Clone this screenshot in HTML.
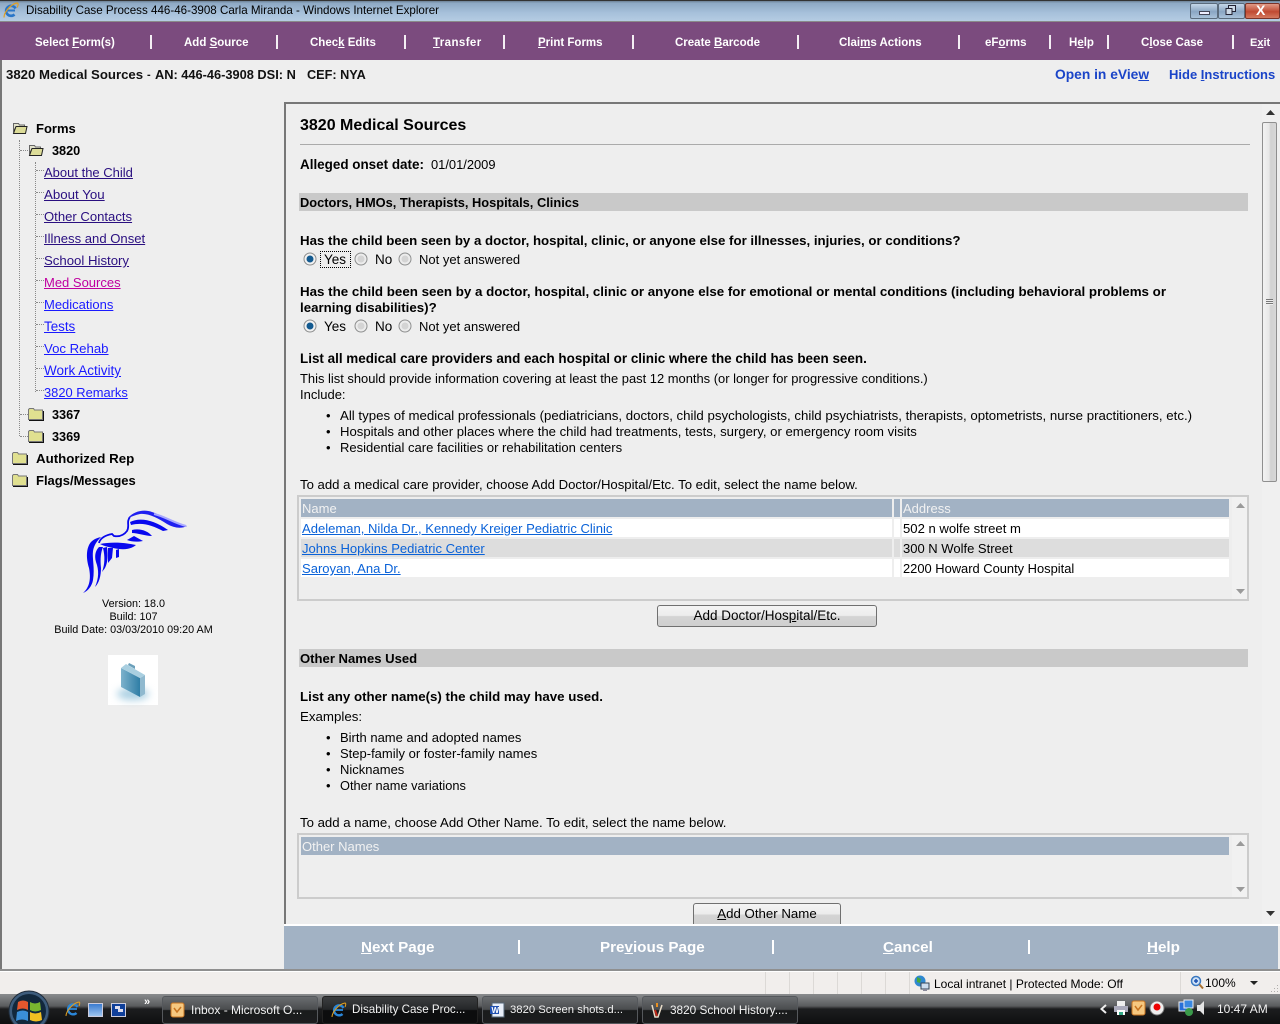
<!DOCTYPE html>
<html><head><meta charset="utf-8"><title>Disability Case Process</title>
<style>
html,body{margin:0;padding:0;width:1280px;height:1024px;overflow:hidden;background:#eee;font-family:"Liberation Sans",Arial,sans-serif;font-size:13px;color:#000}
.t,.a{position:absolute;white-space:nowrap;line-height:16px;margin-top:1px}
.a{display:block}
.b{font-weight:bold;font-size:13.3px}
u{text-decoration:underline}
.n{color:#fff;font-weight:bold;font-size:11.5px;top:35px;margin-top:0}
.z{margin-top:0}
.s{position:absolute;width:2px;background:#f4eef4;top:35px;height:14px}
.l{color:#2a0f80;text-decoration:underline;font-size:13.1px}
.lk{color:#1a1aff;text-decoration:underline;font-size:13.1px}
.p{color:#0a62d8;text-decoration:underline;font-size:13.05px}
.box{position:absolute;background:#eee}
.f{color:#fff;font-weight:bold;font-size:15.2px;top:940px;margin-top:0}
.fs{position:absolute;width:2px;height:14px;top:940px;background:#fff}
.btn{position:absolute;box-sizing:border-box;border:1px solid #707070;border-radius:3px;background:linear-gradient(#f4f4f4 0,#ececec 48%,#d4d4d4 52%,#cfcfcf 100%);text-align:center;font-size:13.25px;line-height:20px}
.tb{position:absolute;top:996px;height:28px;box-sizing:border-box;border:1px solid #55585c;border-radius:3px;color:#f2f2f2;font-size:11.6px;line-height:26px;white-space:nowrap;background:linear-gradient(#6a6d70 0,#4a4c4e 48%,#191b1c 52%,#1c1d1e 100%)}
.dot{position:absolute;border-color:#8a8a8a;border-style:dotted;border-width:0}
svg{position:absolute;overflow:visible}
.st{position:absolute;top:972px;width:1px;height:22px;background:#dcd9d6}
</style></head><body>

<!-- title bar -->
<div class="box" style="left:0;top:0;width:1280px;height:21px;background:linear-gradient(#5d6e80 0,#8ea9c4 15%,#a6c0da 60%,#b5cce2 100%)"></div>
<div class="box" style="left:0;top:0;width:1280px;height:1px;background:#333"></div>
<svg style="left:3px;top:2px" width="16" height="17" viewBox="0 0 16 17"><path d="M12.500 6.500a5 5 0 1 0-1 6" fill="none" stroke="#2a76c8" stroke-width="2.600"/><path d="M3 8.500h9" stroke="#2a76c8" stroke-width="2"/><path d="M1 15.500C1 10 8 2 14 1c1.500 0 1.500 2.500 0 4.500" fill="none" stroke="#e3a020" stroke-width="1.200"/></svg>
<div class="t" style="left:26px;top:2px;font-size:11.6px;color:#000">Disability Case Process 446-46-3908 Carla Miranda - Windows Internet Explorer</div>
<div class="box" style="left:1190px;top:3px;width:26px;height:14px;border:1px solid #5a6b7c;border-radius:2px;background:linear-gradient(#c4d6e8,#8aa6c3 55%,#a9c2da)"></div>
<div class="box" style="left:1199px;top:11px;width:9px;height:2px;background:#eef;border:1px solid #445"></div>
<div class="box" style="left:1218px;top:3px;width:25px;height:14px;border:1px solid #5a6b7c;border-radius:2px;background:linear-gradient(#c4d6e8,#8aa6c3 55%,#a9c2da)"></div>
<svg style="left:1224px;top:4px" width="14" height="12" viewBox="0 0 14 12"><rect x="4.500" y="1.500" width="7" height="6" fill="#cdd9e6" stroke="#223"/><rect x="2" y="4.500" width="6" height="6" fill="#cdd9e6" stroke="#223"/></svg>
<div class="box" style="left:1245px;top:3px;width:33px;height:14px;border:1px solid #7a3328;border-radius:2px;background:linear-gradient(#e09a86,#c04a32 55%,#d47a60)"></div>
<div class="t z" style="left:1256px;top:2px;color:#fff;font-size:14px;font-weight:bold">X</div>

<!-- menu -->
<div class="box" style="left:0;top:21px;width:1280px;height:39px;background:#7b4b7e;border-top:1px solid #8a8a8a;box-sizing:border-box"></div>
<div class="t n" style="left:35px">Select <u>F</u>orm(s)</div><div class="s" style="left:150px"></div>
<div class="t n" style="left:184px">Add <u>S</u>ource</div><div class="s" style="left:276px"></div>
<div class="t n" style="left:310px">Chec<u>k</u> Edits</div><div class="s" style="left:404px"></div>
<div class="t n" style="left:433px;letter-spacing:.4px"><u>T</u>ransfer</div><div class="s" style="left:503px"></div>
<div class="t n" style="left:538px"><u>P</u>rint Forms</div><div class="s" style="left:632px"></div>
<div class="t n" style="left:675px">Create <u>B</u>arcode</div><div class="s" style="left:797px"></div>
<div class="t n" style="left:839px">Clai<u>m</u>s Actions</div><div class="s" style="left:958px"></div>
<div class="t n" style="left:985px">eF<u>o</u>rms</div><div class="s" style="left:1049px"></div>
<div class="t n" style="left:1069px">H<u>e</u>lp</div><div class="s" style="left:1107px"></div>
<div class="t n" style="left:1141px">C<u>l</u>ose Case</div><div class="s" style="left:1232px"></div>
<div class="t n" style="left:1250px;font-size:11px">E<u>x</u>it</div>

<!-- header row -->
<div class="t b" style="left:6px;top:66px;font-size:13.2px;color:#111">3820 Medical Sources</div>
<div class="t" style="left:147px;top:66px;font-size:11px;font-weight:bold;color:#111">-</div>
<div class="t b" style="left:155px;top:66px;font-size:12.8px;color:#111">AN: 446-46-3908 DSI: N</div>
<div class="t b" style="left:307px;top:66px;font-size:12.7px;color:#111">CEF: NYA</div>
<div class="t b" style="left:1055px;top:66px;color:#1a44c8;font-size:13.8px">Open in eVie<u>w</u></div>
<div class="t b" style="left:1169px;top:66px;color:#1a44c8;font-size:13px">Hide <u>I</u>nstructions</div>

<!-- frames -->
<div class="box" style="left:0;top:60px;width:2px;height:910px;background:#777"></div>
<div class="box" style="left:284px;top:102px;width:996px;height:2px;background:#777"></div>
<div class="box" style="left:284px;top:102px;width:2px;height:868px;background:#777"></div>

<!-- tree lines -->
<div class="dot" style="left:19px;top:140px;height:296px;border-left-width:1px"></div>
<div class="dot" style="left:20px;top:150px;width:8px;border-top-width:1px"></div>
<div class="dot" style="left:20px;top:414px;width:8px;border-top-width:1px"></div>
<div class="dot" style="left:20px;top:436px;width:8px;border-top-width:1px"></div>
<div class="dot" style="left:35px;top:162px;height:230px;border-left-width:1px"></div>
<div class="dot" style="left:36px;top:170px;width:8px;border-top-width:1px"></div>
<div class="dot" style="left:36px;top:192px;width:8px;border-top-width:1px"></div>
<div class="dot" style="left:36px;top:214px;width:8px;border-top-width:1px"></div>
<div class="dot" style="left:36px;top:236px;width:8px;border-top-width:1px"></div>
<div class="dot" style="left:36px;top:258px;width:8px;border-top-width:1px"></div>
<div class="dot" style="left:36px;top:280px;width:8px;border-top-width:1px"></div>
<div class="dot" style="left:36px;top:302px;width:8px;border-top-width:1px"></div>
<div class="dot" style="left:36px;top:324px;width:8px;border-top-width:1px"></div>
<div class="dot" style="left:36px;top:346px;width:8px;border-top-width:1px"></div>
<div class="dot" style="left:36px;top:368px;width:8px;border-top-width:1px"></div>
<div class="dot" style="left:36px;top:390px;width:8px;border-top-width:1px"></div>

<!-- folders -->
<svg style="left:12px;top:121px" width="16" height="14" viewBox="0 0 16 14"><path d="M1.500 2.500h5l1 1.500h5v2H4L1.500 10z" fill="#e2e2cc" stroke="#666"/><path d="M1.500 12.500L4 5.500h11l-1.500 7z" fill="#dcdc98" stroke="#222"/></svg>
<svg style="left:28px;top:143px" width="16" height="14" viewBox="0 0 16 14"><path d="M1.500 2.500h5l1 1.500h5v2H4L1.500 10z" fill="#e2e2cc" stroke="#666"/><path d="M1.500 12.500L4 5.500h11l-1.500 7z" fill="#dcdc98" stroke="#222"/></svg>
<svg style="left:28px;top:407px" width="16" height="14" viewBox="0 0 16 14"><path d="M.5 12.500v-10l1-1h4l1 1.500h8v9.500z" fill="#e0e090" stroke="#777"/><path d="M1 13.500h15M15.500 4v9.500" stroke="#111"/></svg>
<svg style="left:28px;top:429px" width="16" height="14" viewBox="0 0 16 14"><path d="M.5 12.500v-10l1-1h4l1 1.500h8v9.500z" fill="#e0e090" stroke="#777"/><path d="M1 13.500h15M15.500 4v9.500" stroke="#111"/></svg>
<svg style="left:12px;top:451px" width="16" height="14" viewBox="0 0 16 14"><path d="M.5 12.500v-10l1-1h4l1 1.500h8v9.500z" fill="#e0e090" stroke="#777"/><path d="M1 13.500h15M15.500 4v9.500" stroke="#111"/></svg>
<svg style="left:12px;top:473px" width="16" height="14" viewBox="0 0 16 14"><path d="M.5 12.500v-10l1-1h4l1 1.500h8v9.500z" fill="#e0e090" stroke="#777"/><path d="M1 13.500h15M15.500 4v9.500" stroke="#111"/></svg>

<!-- tree text -->
<div class="t b" style="left:36px;top:120px;font-size:13px">Forms</div>
<div class="t b" style="left:52px;top:142px;font-size:12.7px">3820</div>
<a class="a l" style="left:44px;top:164px;font-size:13px">About the Child</a>
<a class="a l" style="left:44px;top:186px;font-size:13.3px">About You</a>
<a class="a l" style="left:44px;top:208px">Other Contacts</a>
<a class="a l" style="left:44px;top:230px">Illness and Onset</a>
<a class="a l" style="left:44px;top:252px;font-size:13.2px">School History</a>
<a class="a" style="left:44px;top:274px;font-size:13px;color:#c000a0;text-decoration:underline">Med Sources</a>
<a class="a lk" style="left:44px;top:296px;font-size:13px">Medications</a>
<a class="a lk" style="left:44px;top:318px;font-size:13.4px">Tests</a>
<a class="a lk" style="left:44px;top:340px;font-size:13.2px">Voc Rehab</a>
<a class="a lk" style="left:44px;top:362px;font-size:13.5px">Work Activity</a>
<a class="a lk" style="left:44px;top:384px;font-size:12.9px">3820 Remarks</a>
<div class="t b" style="left:52px;top:406px;font-size:12.7px">3367</div>
<div class="t b" style="left:52px;top:428px;font-size:12.7px">3369</div>
<div class="t b" style="left:36px;top:450px">Authorized Rep</div>
<div class="t b" style="left:36px;top:472px;font-size:13px">Flags/Messages</div>

<!-- eagle logo -->
<svg style="left:70px;top:500px" width="130" height="100" viewBox="0 0 130 100" fill="#0808ee">
<path d="M13 93C20 87 21 78 19 68 16 58 16 48 21 42c3-3 6-4 10-5-4 4-7 8-8 14-1 7 2 17 0 29-1 6-5 11-10 13z"/>
<path d="M25 87c4-9 4-17 1-25-2-7 0-12 3-15l4 0c-2 5-3 11-2 21 0 8-2 15-6 19z"/>
<path d="M32 72c3-8 3-16 1-24l4-1c1 8 1 15-2 21z"/>
<path d="M38 63L38 48l5 0-1 10z"/>
<path d="M46 58V50l3-1v8z"/>
<path d="M30 44c10-2 22-2 36 1-6 5-14 5-23 3-5-1-9-2-13-4z"/>
<path d="M29 43c1-5 7-8 13-9l2 2c6 1 10-1 13-5 3-5-1-9 3-14" fill="none" stroke="#0808ee" stroke-width="1.800"/>
<path d="M58 18C64 11 74 9 82 12 92 15 100 23 117 26c-6 3-13 2-20-2C88 18 78 13 70 14c-5 1-9 3-12 4z" fill="#2020f0"/>
<path d="M60 22c10-5 24-2 38 8l-5 1C82 25 72 22 61 25z"/>
<path d="M62 30c8-2 16 1 20 6-7 0-14-3-20-3z"/>
<path d="M57 40l7-4 9 5c-5 1-11 1-16-1z"/>
<path d="M84 14c10 2 20 9 32 12" fill="none" stroke="#a8a8ff" stroke-width="2"/>
</svg>
<div class="t z" style="left:0;width:267px;text-align:center;top:598px;font-size:10.8px;line-height:13px">Version: 18.0<br>Build: 107<br>Build Date: 03/03/2010 09:20 AM</div>

<!-- briefcase -->
<div class="box" style="left:108px;top:655px;width:50px;height:50px;background:#fff"></div>
<div class="box" style="left:117px;top:688px;width:32px;height:12px;border-radius:50%;background:#a9cfe2;filter:blur(4px)"></div>
<svg style="left:108px;top:655px" width="50" height="50" viewBox="0 0 50 50"><defs><linearGradient id="bc" x1="0" x2="1" y1="0" y2="0"><stop offset="0" stop-color="#7db2cc"/><stop offset="1" stop-color="#2f7ea6"/></linearGradient></defs><path d="M13 13L32 23V42L13 32z" fill="url(#bc)"/><path d="M32 23l5-3V39l-5 3z" fill="#8fb9cf"/><path d="M13 13l5-4 19 11-5 3z" fill="#a9cfe0"/><path d="M20 10l1-2 6 3 0 3z" fill="#6a9fba"/></svg>

<!-- content -->
<div class="t b" style="left:300px;top:115px;font-size:16px;line-height:18px;margin-top:2px">3820 Medical Sources</div>
<div class="box" style="left:300px;top:144px;width:950px;height:1px;background:#aaa"></div>
<div class="t b" style="left:300px;top:156px;font-size:13.45px">Alleged onset date:</div>
<div class="t" style="left:431px;top:156px;font-size:12.9px">01/01/2009</div>

<div class="box" style="left:299px;top:193px;width:949px;height:18px;background:#c9c9c9"></div>
<div class="t b" style="left:300px;top:194px;font-size:12.85px">Doctors, HMOs, Therapists, Hospitals, Clinics</div>

<div class="t b" style="left:300px;top:232px;font-size:13.28px">Has the child been seen by a doctor, hospital, clinic, or anyone else for illnesses, injuries, or conditions?</div>
<svg style="left:303px;top:252px" width="14" height="14"><circle cx="7" cy="7" r="6" fill="#f2f2f2" stroke="#8e8f8f"/><circle cx="7" cy="7" r="3.500" fill="#135a90"/></svg>
<div class="box" style="left:320px;top:251px;width:29px;height:15px;border:1px dotted #000;background:transparent"></div>
<div class="t" style="left:324px;top:251px;font-size:13.5px">Yes</div>
<svg style="left:354px;top:252px" width="14" height="14"><circle cx="7" cy="7" r="6" fill="#ececec" stroke="#8e8f8f"/><circle cx="7" cy="7" r="3.500" fill="#d4d4d4"/></svg>
<div class="t" style="left:375px;top:251px;font-size:13.5px">No</div>
<svg style="left:398px;top:252px" width="14" height="14"><circle cx="7" cy="7" r="6" fill="#ececec" stroke="#8e8f8f"/><circle cx="7" cy="7" r="3.500" fill="#d4d4d4"/></svg>
<div class="t" style="left:419px;top:251px">Not yet answered</div>

<div class="t b" style="left:300px;top:283px;font-size:13.35px">Has the child been seen by a doctor, hospital, clinic or anyone else for emotional or mental conditions (including behavioral problems or</div>
<div class="t b" style="left:300px;top:299px">learning disabilities)?</div>
<svg style="left:303px;top:319px" width="14" height="14"><circle cx="7" cy="7" r="6" fill="#f2f2f2" stroke="#8e8f8f"/><circle cx="7" cy="7" r="3.500" fill="#135a90"/></svg>
<div class="t" style="left:324px;top:318px;font-size:13.5px">Yes</div>
<svg style="left:354px;top:319px" width="14" height="14"><circle cx="7" cy="7" r="6" fill="#ececec" stroke="#8e8f8f"/><circle cx="7" cy="7" r="3.500" fill="#d4d4d4"/></svg>
<div class="t" style="left:375px;top:318px;font-size:13.5px">No</div>
<svg style="left:398px;top:319px" width="14" height="14"><circle cx="7" cy="7" r="6" fill="#ececec" stroke="#8e8f8f"/><circle cx="7" cy="7" r="3.500" fill="#d4d4d4"/></svg>
<div class="t" style="left:419px;top:318px">Not yet answered</div>

<div class="t b" style="left:300px;top:350px;font-size:13.45px">List all medical care providers and each hospital or clinic where the child has been seen.</div>
<div class="t" style="left:300px;top:370px;font-size:12.93px">This list should provide information covering at least the past 12 months (or longer for progressive conditions.)</div>
<div class="t" style="left:300px;top:386px">Include:</div>
<div class="t" style="left:326px;top:407px">•</div><div class="t" style="left:340px;top:407px;font-size:13.25px">All types of medical professionals (pediatricians, doctors, child psychologists, child psychiatrists, therapists, optometrists, nurse practitioners, etc.)</div>
<div class="t" style="left:326px;top:423px">•</div><div class="t" style="left:340px;top:423px;font-size:13.13px">Hospitals and other places where the child had treatments, tests, surgery, or emergency room visits</div>
<div class="t" style="left:326px;top:439px">•</div><div class="t" style="left:340px;top:439px;font-size:13.03px">Residential care facilities or rehabilitation centers</div>
<div class="t" style="left:300px;top:476px;font-size:13.15px">To add a medical care provider, choose Add Doctor/Hospital/Etc. To edit, select the name below.</div>

<!-- table 1 -->
<div class="box" style="left:297px;top:495px;width:952px;height:106px;box-sizing:border-box;border:2px solid #ccc"></div>
<div class="box" style="left:301px;top:499px;width:591px;height:18px;background:#a2b2c4"></div>
<div class="box" style="left:894px;top:499px;width:6px;height:18px;background:#a2b2c4"></div>
<div class="box" style="left:902px;top:499px;width:327px;height:18px;background:#a2b2c4"></div>
<div class="box" style="left:301px;top:519px;width:591px;height:18px;background:#fff"></div>
<div class="box" style="left:894px;top:519px;width:6px;height:18px;background:#fff"></div>
<div class="box" style="left:902px;top:519px;width:327px;height:18px;background:#fff"></div>
<div class="box" style="left:301px;top:539px;width:591px;height:18px;background:#ddd"></div>
<div class="box" style="left:894px;top:539px;width:6px;height:18px;background:#ddd"></div>
<div class="box" style="left:902px;top:539px;width:327px;height:18px;background:#ddd"></div>
<div class="box" style="left:301px;top:559px;width:591px;height:18px;background:#fff"></div>
<div class="box" style="left:894px;top:559px;width:6px;height:18px;background:#fff"></div>
<div class="box" style="left:902px;top:559px;width:327px;height:18px;background:#fff"></div>
<div class="t" style="left:302px;top:500px;color:#f2f2f2">Name</div>
<div class="t" style="left:903px;top:500px;color:#f2f2f2">Address</div>
<a class="a p" style="left:302px;top:520px">Adeleman, Nilda Dr., Kennedy Kreiger Pediatric Clinic</a>
<a class="a p" style="left:302px;top:540px">Johns Hopkins Pediatric Center</a>
<a class="a p" style="left:302px;top:560px">Saroyan, Ana Dr.</a>
<div class="t" style="left:903px;top:520px;font-size:13.1px">502 n wolfe street m</div>
<div class="t" style="left:903px;top:540px">300 N Wolfe Street</div>
<div class="t" style="left:903px;top:560px;font-size:12.9px">2200 Howard County Hospital</div>
<div class="box" style="left:1232px;top:497px;width:15px;height:102px;background:#f1f1f1"></div>
<svg style="left:1236px;top:503px" width="9" height="5"><path d="M0 5L4.500 0 9 5z" fill="#9a9a9a"/></svg>
<svg style="left:1236px;top:589px" width="9" height="5"><path d="M0 0L4.500 5 9 0z" fill="#9a9a9a"/></svg>

<div class="btn" style="left:657px;top:605px;width:220px;height:22px;font-size:13.5px">Add Doctor/Hos<u>p</u>ital/Etc.</div>

<div class="box" style="left:299px;top:649px;width:949px;height:18px;background:#c9c9c9"></div>
<div class="t b" style="left:300px;top:650px;font-size:13.1px">Other Names Used</div>

<div class="t b" style="left:300px;top:688px">List any other name(s) the child may have used.</div>
<div class="t" style="left:300px;top:708px;font-size:13.3px">Examples:</div>
<div class="t" style="left:326px;top:729px">•</div><div class="t" style="left:340px;top:729px">Birth name and adopted names</div>
<div class="t" style="left:326px;top:745px">•</div><div class="t" style="left:340px;top:745px">Step-family or foster-family names</div>
<div class="t" style="left:326px;top:761px">•</div><div class="t" style="left:340px;top:761px">Nicknames</div>
<div class="t" style="left:326px;top:777px">•</div><div class="t" style="left:340px;top:777px;font-size:12.8px">Other name variations</div>
<div class="t" style="left:300px;top:814px;font-size:13.2px">To add a name, choose Add Other Name. To edit, select the name below.</div>

<!-- table 2 -->
<div class="box" style="left:297px;top:833px;width:952px;height:66px;box-sizing:border-box;border:2px solid #ccc"></div>
<div class="box" style="left:301px;top:837px;width:928px;height:18px;background:#a2b2c4"></div>
<div class="t" style="left:302px;top:838px;color:#f2f2f2">Other Names</div>
<div class="box" style="left:1232px;top:835px;width:15px;height:62px;background:#f1f1f1"></div>
<svg style="left:1236px;top:841px" width="9" height="5"><path d="M0 5L4.500 0 9 5z" fill="#9a9a9a"/></svg>
<svg style="left:1236px;top:887px" width="9" height="5"><path d="M0 0L4.500 5 9 0z" fill="#9a9a9a"/></svg>

<div class="btn" style="left:693px;top:903px;width:148px;height:22px;border-bottom:none;border-radius:3px 3px 0 0;line-height:19px"><u>A</u>dd Other Name</div>

<!-- page scrollbar -->
<div class="box" style="left:1262px;top:104px;width:18px;height:820px;background:#f0f0f0"></div>
<svg style="left:1266px;top:110px" width="9" height="5"><path d="M0 5L4.500 0 9 5z" fill="#333"/></svg>
<svg style="left:1266px;top:911px" width="9" height="5"><path d="M0 0L4.500 5 9 0z" fill="#333"/></svg>
<div class="box" style="left:1262px;top:122px;width:15px;height:360px;box-sizing:border-box;border:1px solid #8f8f8f;border-radius:2px;background:linear-gradient(90deg,#f2f2f2,#e8e8e8 45%,#d2d2d2 60%,#d8d8d8)"></div>
<div class="box" style="left:1266px;top:299px;width:7px;height:6px;background:repeating-linear-gradient(#777 0,#777 1px,#eee 1px,#eee 2px)"></div>

<!-- footer buttons -->
<div class="box" style="left:284px;top:924px;width:996px;height:2px;background:#fff"></div>
<div class="box" style="left:284px;top:926px;width:994px;height:43px;background:#a2b2c4"></div>
<div class="t f" style="left:361px"><u>N</u>ext Page</div><div class="fs" style="left:518px"></div>
<div class="t f" style="left:600px">Pre<u>v</u>ious Page</div><div class="fs" style="left:772px"></div>
<div class="t f" style="left:883px"><u>C</u>ancel</div><div class="fs" style="left:1028px"></div>
<div class="t f" style="left:1147px"><u>H</u>elp</div>

<!-- status bar -->
<div class="box" style="left:0;top:969px;width:1280px;height:2px;background:#8f8f8f"></div>
<div class="box" style="left:0;top:971px;width:1280px;height:24px;background:#f1eeec;border-top:1px solid #fff;box-sizing:border-box"></div>
<div class="st" style="left:765px"></div><div class="st" style="left:789px"></div><div class="st" style="left:813px"></div><div class="st" style="left:837px"></div><div class="st" style="left:861px"></div><div class="st" style="left:885px"></div><div class="st" style="left:909px"></div><div class="st" style="left:1180px"></div>
<svg style="left:913px;top:975px" width="17" height="17" viewBox="0 0 17 17"><circle cx="7" cy="6" r="5.500" fill="#2f88d0"/><path d="M4 2l4 2-1 4-3-1zM8 8l3 1-1 2z" fill="#46a83c"/><rect x="8" y="8" width="8" height="6" fill="#cde" stroke="#345"/><rect x="10" y="14" width="4" height="2" fill="#889"/></svg>
<div class="t z" style="left:934px;top:976px;font-size:12px">Local intranet | Protected Mode: Off</div>
<svg style="left:1190px;top:975px" width="14" height="15" viewBox="0 0 14 15"><circle cx="6" cy="6" r="4.500" fill="#cfe2f6" stroke="#3a78c0" stroke-width="1.500"/><path d="M4 6h4M6 4v4" stroke="#1a50b0" stroke-width="1.500"/><path d="M9.500 9.500l3.500 4" stroke="#a87030" stroke-width="2"/></svg>
<div class="t z" style="left:1205px;top:975px;font-size:12px">100%</div>
<svg style="left:1250px;top:981px" width="8" height="5"><path d="M0 0h8L4 4z" fill="#222"/></svg>
<svg style="left:1270px;top:984px" width="9" height="9"><path d="M7 1h1v1H7zM4 4h1v1H4zM7 4h1v1H7zM1 7h1v1H1zM4 7h1v1H4zM7 7h1v1H7z" fill="#b0aeac"/></svg>

<!-- taskbar -->
<div class="box" style="left:0;top:994px;width:1280px;height:30px;background:linear-gradient(#8a8c8e 0,#5a5c5e 40%,#1c1d1f 50%,#0e0f10 100%)"></div>
<svg style="left:8px;top:990px" width="44" height="34" viewBox="0 0 44 34"><circle cx="21" cy="21" r="20" fill="#3d5c7c" stroke="#202c3a"/><circle cx="21" cy="21" r="17" fill="#12283c"/><path d="M10 12q5-3 10 0v8q-5-3-11 0z" fill="#e4572e"/><path d="M22 12q5 3 10 0l1 8q-6 3-11 0z" fill="#7ab62f"/><path d="M9 22q6-3 11 0v9q-6-3-12 0z" fill="#3a8fd8"/><path d="M22 22q5 3 11 0l1 8q-6 3-12 0z" fill="#f2c022"/></svg>
<svg style="left:65px;top:1001px" width="16" height="17" viewBox="0 0 16 17"><path d="M12.500 6a5 5 0 1 0-1 6" fill="none" stroke="#2a86d8" stroke-width="2.400"/><path d="M3 8h9" stroke="#2a86d8" stroke-width="1.800"/><path d="M1 15C1 10 8 2 14 1c1 0 1 2 0 4" fill="none" stroke="#e3a020"/></svg>
<div class="box" style="left:88px;top:1003px;width:13px;height:12px;background:linear-gradient(#3a7bd0,#9cc4ee);border:1px solid #ccd"></div>
<div class="box" style="left:111px;top:1003px;width:13px;height:12px;background:#0f3f9a;border:1px solid #ccd"></div>
<div class="box" style="left:115px;top:1006px;width:5px;height:3px;background:#dde"></div><div class="box" style="left:118px;top:1009px;width:5px;height:3px;background:#dde"></div>
<div class="t z" style="left:144px;top:996px;color:#fff;font-size:11px;line-height:12px;font-weight:bold">»</div>

<div class="tb" style="left:162px;width:156px;padding-left:28px;font-size:12px">Inbox - Microsoft O...</div>
<svg style="left:170px;top:1002px" width="15" height="16" viewBox="0 0 15 16"><rect x="1" y="1" width="13" height="14" rx="2" fill="#f6c880" stroke="#c87420"/><path d="M4 6l3 4 4-5" fill="none" stroke="#c87420" stroke-width="1.500"/></svg>
<div class="tb" style="left:322px;width:156px;padding-left:29px;background:linear-gradient(#3c3e40 0,#242628 48%,#0c0d0e 52%,#0c0d0e 100%);border-color:#222">Disability Case Proc...</div>
<svg style="left:331px;top:1002px" width="16" height="17" viewBox="0 0 16 17"><path d="M12.500 6a5 5 0 1 0-1 6" fill="none" stroke="#2a86d8" stroke-width="2.400"/><path d="M3 8h9" stroke="#2a86d8" stroke-width="1.800"/><path d="M1 15C1 10 8 2 14 1c1 0 1 2 0 4" fill="none" stroke="#e3a020"/></svg>
<div class="tb" style="left:482px;width:156px;padding-left:27px;font-size:11.3px">3820 Screen shots.d...</div>
<svg style="left:490px;top:1002px" width="15" height="16" viewBox="0 0 15 16"><rect x="2" y="1" width="12" height="14" fill="#e8eef8" stroke="#567"/><rect x="0" y="4" width="9" height="8" fill="#2050b0"/><text x="1.500" y="11" font-size="8" font-weight="bold" fill="#fff" font-family="Liberation Sans">W</text></svg>
<div class="tb" style="left:642px;width:156px;padding-left:27px;font-size:11.8px">3820 School History....</div>
<svg style="left:650px;top:1002px" width="14" height="16" viewBox="0 0 14 16"><path d="M2 3l3 12h3l4-12" fill="none" stroke="#e8dcc8" stroke-width="1.500"/><path d="M7 1v4" stroke="#e89020" stroke-width="2"/><path d="M5 8l2 6" stroke="#c02818" stroke-width="2"/></svg>

<!-- tray -->
<svg style="left:1100px;top:1004px" width="7" height="10"><path d="M6 1L1.500 5 6 9" fill="none" stroke="#eee" stroke-width="2"/></svg>
<svg style="left:1113px;top:1000px" width="16" height="16" viewBox="0 0 16 16"><rect x="4" y="1" width="8" height="5" fill="#eee"/><rect x="1" y="6" width="14" height="6" fill="#aab"/><rect x="4" y="10" width="8" height="5" fill="#fff"/><rect x="6" y="12" width="4" height="3" fill="#3a8"/></svg>
<svg style="left:1131px;top:1000px" width="15" height="16" viewBox="0 0 15 16"><rect x="1" y="1" width="13" height="14" rx="2" fill="#f6c880" stroke="#c87420"/><path d="M4 6l3 4 4-5" fill="none" stroke="#c87420" stroke-width="1.500"/></svg>
<svg style="left:1149px;top:1000px" width="16" height="16" viewBox="0 0 16 16"><circle cx="8" cy="8" r="7" fill="#eee" stroke="#777"/><circle cx="8" cy="7" r="3.500" fill="#e00"/></svg>
<svg style="left:1178px;top:999px" width="16" height="18" viewBox="0 0 16 18"><rect x="1" y="3" width="10" height="9" fill="#2870d8" stroke="#eee"/><rect x="6" y="1" width="9" height="8" fill="#3a88e0" stroke="#eee"/><circle cx="11" cy="13" r="4" fill="#3a9a4a"/></svg>
<svg style="left:1196px;top:1000px" width="10" height="16" viewBox="0 0 10 16"><path d="M1 5h3l4-4v14l-4-4H1z" fill="#e4e4e4"/></svg>
<div class="t z" style="left:1217px;top:1001px;color:#f2f2f2;font-size:12px">10:47 AM</div>
</body></html>
